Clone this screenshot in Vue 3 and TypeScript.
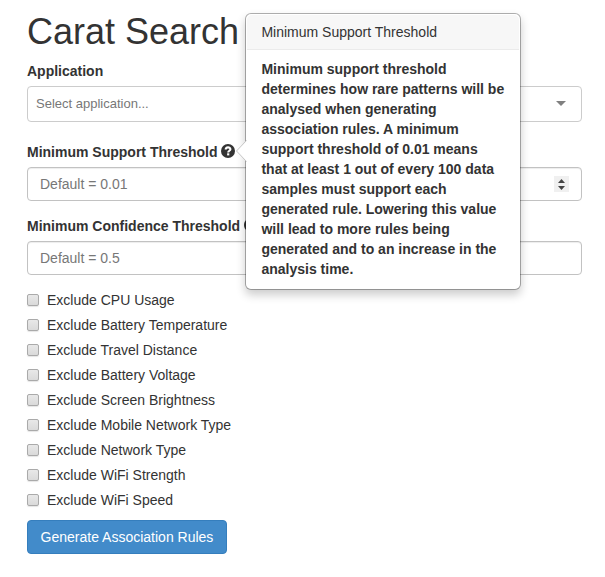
<script setup lang="ts">
import { ref } from 'vue'

interface Exclusion {
  id: string
  label: string
}

const exclusions: Exclusion[] = [
  { id: 'cpu', label: 'Exclude CPU Usage' },
  { id: 'temperature', label: 'Exclude Battery Temperature' },
  { id: 'distance', label: 'Exclude Travel Distance' },
  { id: 'voltage', label: 'Exclude Battery Voltage' },
  { id: 'brightness', label: 'Exclude Screen Brightness' },
  { id: 'mobile', label: 'Exclude Mobile Network Type' },
  { id: 'network', label: 'Exclude Network Type' },
  { id: 'strength', label: 'Exclude WiFi Strength' },
  { id: 'speed', label: 'Exclude WiFi Speed' },
]

const selected = ref<string[]>([])
const support = ref('')
const confidence = ref('')
</script>

<template>
  <main class="page">
    <h1>Carat Search</h1>
    <form @submit.prevent>
      <div class="group group-select">
        <label class="title">Application</label>
        <div class="select">
          <span>Select application...</span>
          <svg class="caret" width="10" height="5" viewBox="0 0 10 5"><path d="M0 0H10L5 5Z" fill="#808080" /></svg>
        </div>
      </div>

      <div class="group">
        <label class="title" for="support">
          Minimum Support Threshold
          <span class="help">
            <svg width="14" height="14" viewBox="0 0 14 14">
              <circle cx="7" cy="7" r="7" fill="#333" />
              <path d="M4.7 5.6C4.7 2.6 9.4 2.7 9.4 5.2C9.4 6.8 7.2 6.7 7.2 8.4" fill="none" stroke="#fff" stroke-width="2.1" />
              <path d="M6.1 9.3H8.3V11.4H6.1Z" fill="#fff" />
            </svg>
            <div class="popover">
              <svg class="arrow" width="11" height="22" viewBox="0 0 11 22">
                <path d="M11 0L0 11L11 22Z" fill="#fff" />
                <path d="M10.5 .5L.5 11L10.5 21.5" fill="none" stroke="#c4c4c4" />
              </svg>
              <h3>Minimum Support Threshold</h3>
              <p>
                Minimum support threshold determines how rare patterns will be analysed when
                generating association rules. A minimum support threshold of 0.01 means that at
                least 1 out of every 100 data samples must support each generated rule. Lowering
                this value will lead to more rules being generated and to an increase in the
                analysis time.
              </p>
            </div>
          </span>
        </label>
        <div class="field">
          <input id="support" v-model="support" type="text" placeholder="Default = 0.01" />
          <span class="spinner">
            <svg width="15" height="16" viewBox="0 0 15 16">
              <path d="M4 7L7.5 3L11 7ZM4 10H11L7.5 14Z" fill="#444" />
            </svg>
          </span>
        </div>
      </div>

      <div class="group">
        <label class="title" for="confidence">
          Minimum Confidence Threshold
          <span class="help">
            <svg width="14" height="14" viewBox="0 0 14 14">
              <circle cx="7" cy="7" r="7" fill="#333" />
              <path d="M4.7 5.6C4.7 2.6 9.4 2.7 9.4 5.2C9.4 6.8 7.2 6.7 7.2 8.4" fill="none" stroke="#fff" stroke-width="2.1" />
              <path d="M6.1 9.3H8.3V11.4H6.1Z" fill="#fff" />
            </svg>
          </span>
        </label>
        <div class="field">
          <input id="confidence" v-model="confidence" type="text" placeholder="Default = 0.5" />
        </div>
      </div>

      <div class="checks">
        <label v-for="item in exclusions" :key="item.id" class="check">
          <input v-model="selected" type="checkbox" :value="item.id" />
          <span>{{ item.label }}</span>
        </label>
      </div>
      <button type="submit">Generate Association Rules</button>
    </form>
  </main>
</template>

<style>
body {
  background: #fff;
}
</style>

<style scoped>
* {
  box-sizing: border-box;
}
.page {
  padding: 12px 23px 0 27px;
  height: 577px;
  overflow: hidden;
  font: 14px/20px "Liberation Sans", Arial, sans-serif;
  color: #333;
}
h1 {
  margin: 0 0 10px;
  font-size: 36px;
  line-height: 39px;
  font-weight: 500;
}
.group {
  margin-bottom: 15px;
}
.group-select {
  margin-bottom: 20px;
}
.title {
  display: block;
  height: 20px;
  margin-bottom: 5px;
  font-weight: bold;
  white-space: nowrap;
}
.select {
  display: flex;
  align-items: center;
  justify-content: space-between;
  height: 36px;
  padding: 0 15px 0 8px;
  border: 1px solid #ccc;
  border-radius: 4px;
  font-size: 13px;
  color: #777;
}
.caret {
  display: block;
  margin-bottom: 1px;
}
.field {
  display: flex;
  align-items: center;
  height: 34px;
  padding: 0 12px;
  border: 1px solid #c2c2c2;
  border-radius: 4px;
  box-shadow: inset 0 1px 1px rgba(0, 0, 0, 0.075);
}
.field input {
  flex: 1;
  min-width: 0;
  height: 20px;
  padding: 0;
  border: 0;
  outline: 0;
  background: transparent;
  font: inherit;
  color: #555;
}
.field input::placeholder {
  color: #777;
  opacity: 1;
}
.spinner {
  width: 15px;
  height: 16px;
  background: #f0f0f0;
}
.spinner svg {
  display: block;
}
.help {
  position: relative;
  display: inline-block;
  width: 14px;
  height: 14px;
  vertical-align: -1px;
}
.help > svg {
  display: block;
}
.popover {
  position: absolute;
  z-index: 10;
  top: -131px;
  left: 24px;
  width: 276px;
  height: 277px;
  padding: 1px;
  background: #fff;
  background-clip: padding-box;
  border: 1px solid rgba(0, 0, 0, 0.3);
  border-radius: 6px;
  box-shadow: 0 5px 10px rgba(0, 0, 0, 0.2);
  white-space: normal;
}
.arrow {
  position: absolute;
  left: -10px;
  top: 126px;
}
.popover h3 {
  margin: 0;
  padding: 8px 14px;
  height: 35px;
  font-size: 14px;
  line-height: 18px;
  font-weight: normal;
  background: #f7f7f7;
  border-bottom: 1px solid #ebebeb;
  border-radius: 5px 5px 0 0;
}
.popover p {
  margin: 0;
  padding: 9px 14px;
}
.checks {
  display: flex;
  flex-direction: column;
  gap: 5px;
  margin-bottom: 10px;
}
.check {
  display: flex;
  align-items: flex-start;
  gap: 8px;
  height: 20px;
}
.check input {
  appearance: none;
  width: 12px;
  height: 12px;
  margin: 4px 0 0;
  border: 1px solid #aaa;
  border-radius: 2px;
  background: linear-gradient(#e8e8e8, #dadada);
  box-shadow: 0 1px 1px rgba(0, 0, 0, 0.1);
}
.check input:checked {
  background: #428bca;
}
button {
  display: block;
  width: 200px;
  height: 34px;
  padding: 6px 12px;
  font: inherit;
  color: #fff;
  background: #428bca;
  border: 1px solid #357ebd;
  border-radius: 4px;
}
</style>
